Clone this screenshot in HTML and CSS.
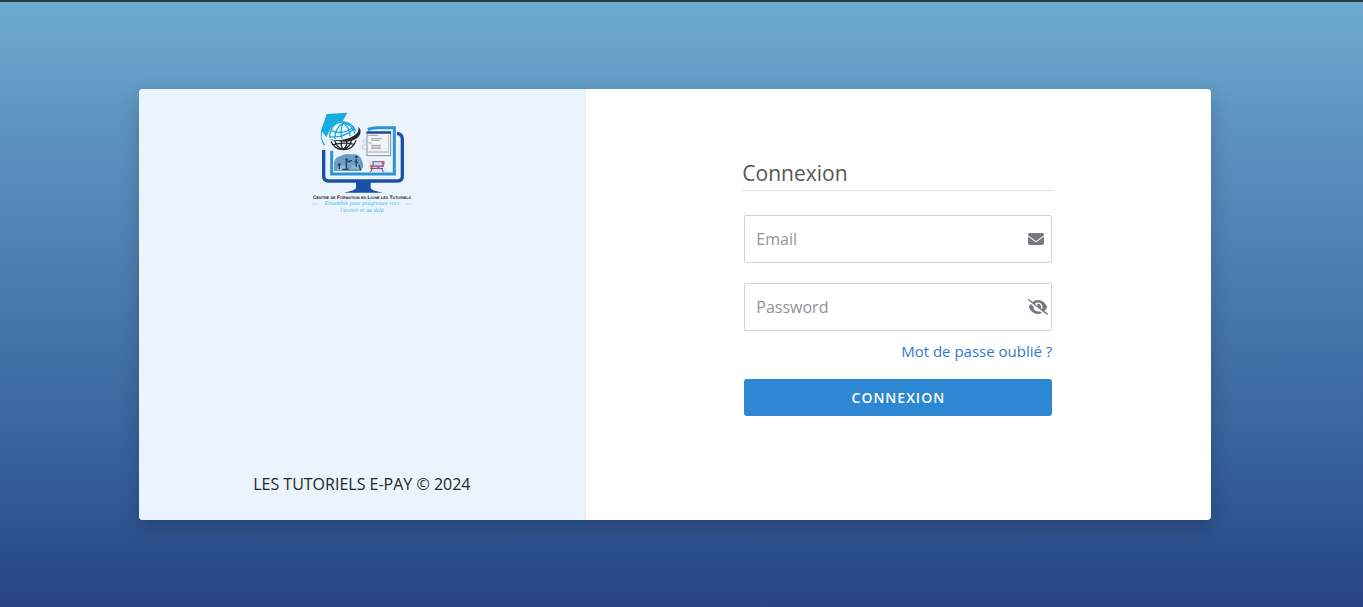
FILE: index.html
```html
<!DOCTYPE html>
<html lang="fr">
    <head>
        <meta charset="UTF-8" />
        <meta name="viewport" content="width=device-width, initial-scale=1.0" />
        <link rel="stylesheet" href="styles.css">
        <title>Connexion</title>
    </head>
    <body>
        <main class="login-card">
            <section class="brand">
                <svg class="logo" viewBox="0 0 360 345" role="img" aria-label="Centre de Formation en Ligne les Tutoriels">
                    <!-- monitor -->
                    <path d="M65 135v78q0 15 15 15h206q15 0 15-15V103q0-16-16-18" fill="none" stroke="#1b50a4" stroke-width="10" />
                    <path d="M89 138v69h188V68h-50q-16 0-30 5" fill="none" stroke="#2b94d5" stroke-width="9" />
                    <path d="M162 231h44v18q2 8 36 14H126q34-6 36-14z" fill="#1b50a4" />
                    <!-- class and desk pictures -->
                    <path d="M96 198v-26q3-16 22-20 12-8 30-4 24-3 30 14 12 22-2 36z" fill="#6c9dc5" />
                    <path d="M103 195l6-14h20l5 14zM145 192l4-12h24l6 12z" fill="#8fb5d3" />
                    <g stroke="#263d60" stroke-width="4" fill="none">
                        <path d="M133 169v23M136 171l14-5M163 162v23M158 169l10 4M112 183v10M171 180l5 16M122 193h18" />
                    </g>
                    <g fill="#263d60">
                        <circle cx="134" cy="164" r="4" />
                        <circle cx="163" cy="156" r="4" />
                        <circle cx="112" cy="179" r="4" />
                    </g>
                    <path d="M197 166h52v36h-46z" fill="#e7e4ee" />
                    <path d="M211 168h35v18h-35z" fill="#7c82b6" />
                    <path d="M216 172h24v9h-24z" fill="#d9def0" />
                    <path d="M205 190h38M211 190l-5 11M239 190l5 12" stroke="#4b547f" stroke-width="3" />
                    <g fill="#db5a5b">
                        <circle cx="209" cy="184" r="5" />
                        <circle cx="229" cy="188" r="4" />
                        <circle cx="243" cy="174" r="5" />
                    </g>
                    <!-- document -->
                    <path d="M195 82h71v70h-71z" fill="#f2f4f7" stroke="#555e6a" stroke-width="2" />
                    <path d="M194 79h73v7h-73z" fill="#234b99" />
                    <path d="M199 91h30M207 101h32M207 106h26M199 114h10M207 121h30M207 126h29M207 131h30M199 141h58" stroke="#7a7c80" stroke-width="2" />
                    <path d="M260 90v56" stroke="#b5bbc3" stroke-width="3" />
                    <g fill="none" stroke="#c2ccd7" stroke-width="3">
                        <circle cx="188" cy="109" r="5" />
                        <circle cx="187" cy="126" r="7" />
                    </g>
                    <!-- graduation cap -->
                    <path d="M74 27l62-4-14 26q-28 4-41 31l-8 17-12-17-3 18 11 21-4 3-9-23 1-22z" fill="#1aaae2" />
                    <!-- globe -->
                    <circle cx="124" cy="93" r="40" fill="#f3f9fd" />
                    <g fill="none" stroke="#1aaae2" stroke-width="4">
                        <path d="M84 99a40 41 0 0 1 77-21M99 102q-2-32 26-49 30 10 33 34M120 101q-8-26 5-48 20 18 19 41M88 77q34 15 67-11M84 95q42 4 73-24" />
                    </g>
                    <g fill="none" stroke="#242a30" stroke-width="4">
                        <path d="M87 109q9 25 37 25 29 0 38-28M98 107q8 22 26 27 22-9 25-31M118 108q-2 17 6 26 13-12 10-29M92 120q31-10 65-2" />
                    </g>
                    <path d="M77 103q49 8 77-10 20-12 15-28 14 13 1 30-24 25-93 8z" fill="#242a30" />
                    <!-- captions -->
                    <text class="logo-name" x="180" y="282">Centre de Formation en Ligne les Tutoriels</text>
                    <path d="M31 297h19M310 297h19" stroke="#8ccced" stroke-width="2" />
                    <text class="logo-motto" x="180" y="301">Ensemble pour progresser vers</text>
                    <text class="logo-motto" x="180" y="322">l'avenir et au delà</text>
                </svg>
                <p class="copyright">LES TUTORIELS E-PAY © 2024</p>
            </section>
            <section class="login">
                <form class="login-form">
                    <h1>Connexion</h1>
                    <div class="fields">
                        <div class="field">
                            <input type="email" id="email" placeholder="Email" aria-label="Email" />
                            <label class="field-icon" for="email">
                                <svg width="16" height="16" viewBox="0 0 512 512" aria-hidden="true">
                                    <path fill="currentColor" d="M48 64C21.500 64 0 85.500 0 112c0 15 7 29 19 38l218 163c11 9 27 9 38 0l218-163c12-9 19-23 19-38 0-26.500-21.500-48-48-48zM0 176v208c0 35 29 64 64 64h384c35 0 64-29 64-64V176L294 339c-23 17-53 17-76 0z" />
                                </svg>
                            </label>
                        </div>
                        <div class="field">
                            <input type="password" id="password" placeholder="Password" aria-label="Password" />
                            <button class="field-icon toggle" type="button" aria-label="Afficher le mot de passe">
                                <svg width="20" height="16" viewBox="0 0 640 512" aria-hidden="true">
                                    <path fill="currentColor" d="M39 5C28-3 13-1 5 9s-6 25 4 34l592 464c10 8 26 6 34-4s6-26-4-34L526 387c39-41 66-86 79-119 3-8 3-17 0-25-15-35-46-87-93-131-47-43-111-80-192-80-68 0-125 26-169 61zM223 150c26-23 60-38 97-38 80 0 144 65 144 144 0 25-6 48-18 69l-38-30c9-21 11-46 5-70-13-51-65-82-114-64-3 1-4 4-3 7 3 7 4 15 4 24 0 10-2 20-7 28zM373 390c-17 7-35 10-53 10-80 0-144-64-144-144 0-7 0-14 1-20L83 162c-23 30-40 59-48 82-3 8-3 17 0 24 15 36 46 88 93 132 47 43 111 80 192 80 47 0 90-13 127-32z" />
                                </svg>
                            </button>
                        </div>
                        <a class="forgot" href="#">Mot de passe oublié ?</a>
                        <button class="submit" type="submit">Connexion</button>
                    </div>
                </form>
            </section>
        </main>
    </body>
</html>
```
FILE: styles.css
```css
* {
    margin: 0;
    padding: 0;
    box-sizing: border-box;
}
:root {
    --primary: #2d87d3;
    --panel: #ebf4fc;
    --grey: #77777f;
    --font-fam: 'Open Sans', sans-serif;
}

/* body */
body {
    min-height: 100vh;
    display: flex;
    justify-content: center;
    align-items: center;
    padding: 20px 13px 20px 0;
    border-top: 2px solid #35363e;
    background: linear-gradient(#6dacd1, #5e94c0 20%, #335c97 80%, #264380) border-box;
    font-family: var(--font-fam);
    font-size: 16px;
    line-height: 24px;
}

/* card */
.login-card {
    display: grid;
    grid-template-columns: 5fr 7fr;
    width: min(1072px, 90%);
    border-radius: 4px;
    overflow: hidden;
    background-color: #fff;
    box-shadow: 0 8px 20px rgba(0, 0, 0, 0.2);
}

.brand {
    display: flex;
    flex-direction: column;
    justify-content: space-between;
    align-items: center;
    padding: 16px 24px 24px;
    background-color: var(--panel);
    border-right: 1px solid #e3edf5;
}

.logo {
    width: 120px;
}

.logo-name,
.logo-motto {
    text-anchor: middle;
    text-rendering: geometricPrecision;
}

.logo-name {
    font: bold 15px 'Liberation Sans', sans-serif;
    font-variant: small-caps;
    fill: #15171c;
}

.logo-motto {
    font: italic 18px 'Liberation Serif', cursive;
    fill: #45b5e6;
}

.copyright {
    color: #212529;
}

/* form */
.login {
    display: flex;
    justify-content: center;
    padding: 68px 24px 104px;
}

.login-form {
    width: 312px;
}

.login-form h1 {
    padding-bottom: 1px;
    border-bottom: 1px solid #dee2e6;
    color: #555;
    font-size: 21px;
    font-weight: 400;
    line-height: 32px;
}

.fields {
    display: flex;
    flex-direction: column;
    padding: 24px 2px 0;
}

.field {
    position: relative;
    margin-bottom: 20px;
}

.field input {
    display: block;
    width: 100%;
    height: 48px;
    padding: 0 36px 0 11px;
    border: 1px solid #d3d4d6;
    border-radius: 2px;
    font: inherit;
    color: #333;
}

.field input::placeholder {
    color: #929297;
}

.field-icon {
    position: absolute;
    top: 0;
    bottom: 0;
    right: 8px;
    display: flex;
    align-items: center;
    color: var(--grey);
}

.toggle {
    right: 4px;
    border: none;
    background: none;
    cursor: pointer;
}

.forgot {
    align-self: flex-end;
    margin-top: -12px;
    margin-bottom: 16px;
    color: #3279cc;
    font-size: 15px;
    text-decoration: none;
}

.submit {
    height: 37px;
    border: none;
    border-radius: 3px;
    background-color: var(--primary);
    color: #fff;
    font-family: inherit;
    font-size: 14px;
    font-weight: 600;
    letter-spacing: 1px;
    text-transform: uppercase;
    cursor: pointer;
}

/* Small screens */
@media (max-width: 800px) {
    .login-card {
        grid-template-columns: 1fr;
    }

    .login {
        padding-block: 32px;
    }
}
```
